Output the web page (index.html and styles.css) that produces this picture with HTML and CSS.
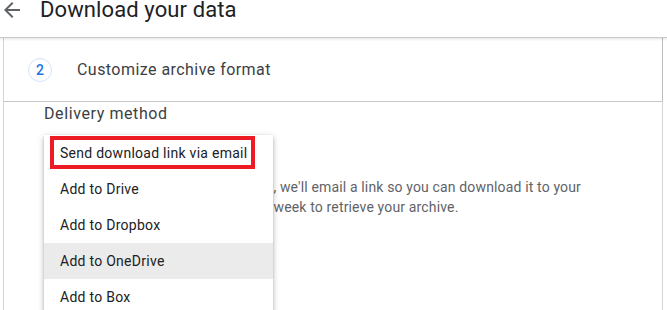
FILE: index.html
```html
<!DOCTYPE html>
<html lang="en">
<head>
<meta charset="utf-8">
<title>Download your data</title>
<link rel="stylesheet" href="styles.css">
</head>
<body>
<header class="topbar">
  <svg class="back" viewBox="0 0 24 24" width="24" height="24" aria-hidden="true"><path d="M20 11H7.83l5.59-5.59L12 4l-8 8 8 8 1.41-1.41L7.83 13H20v-2z"/></svg>
  <h1 class="title">Download your data</h1>
</header>
<main class="card">
  <div class="step">
    <span class="step-num">2</span>
    <span class="step-label">Customize archive format</span>
  </div>
  <section class="delivery">
    <div class="delivery-label">Delivery method</div>
    <div class="select-slot"></div>
    <p class="desc">When your archive has been created, we'll email a link so you can download it to your device. You will then have up to one week to retrieve your archive.</p>
    <ul class="menu">
      <li class="menu-item">Send download link via email<span class="mark"></span></li>
      <li class="menu-item">Add to Drive</li>
      <li class="menu-item">Add to Dropbox</li>
      <li class="menu-item hover">Add to OneDrive</li>
      <li class="menu-item">Add to Box</li>
    </ul>
  </section>
</main>
</body>
</html>
```
FILE: styles.css
```css
* { box-sizing: border-box; }
html, body { margin: 0; padding: 0; }
body {
  width: 667px;
  height: 310px;
  overflow: hidden;
  background: #fff;
  font-family: Roboto, "Liberation Sans", Arial, sans-serif;
  color: #202124;
}
.topbar {
  display: flex;
  align-items: flex-start;
  height: 38px;
  border-bottom: 1px solid #c9c9c9;
  box-shadow: 0 1px 3px rgba(0,0,0,0.12);
  position: relative;
  z-index: 1;
}
.back {
  fill: #5f6368;
  margin-top: -2px;
  margin-right: 16px;
  flex: none;
}
.title {
  margin: 0;
  font-size: 22px;
  font-weight: 400;
  line-height: 20px;
  color: #202124;
  letter-spacing: 0.1px;
}
.card {
  margin-left: 3px;
  width: 660px;
  height: 272px;
  border-left: 1px solid #d4d4d4;
  border-right: 1px solid #d4d4d4;
}
.step {
  display: flex;
  align-items: center;
  height: 64px;
  padding-left: 24px;
  border-bottom: 1px solid #c6c6c6;
  border-right: 1px solid #bdbdbd;
  margin-right: -1px;
}
.step-num {
  width: 24px;
  height: 24px;
  border-radius: 50%;
  border: 1px solid #d2e3fc;
  color: #1a73e8;
  font-size: 14px;
  font-weight: 500;
  display: flex;
  align-items: center;
  justify-content: center;
  margin-right: 25px;
}
.step-label {
  font-size: 16px;
  color: #3c4043;
  letter-spacing: 0.45px;
}
.delivery {
  position: relative;
  padding-left: 40px;
}
.delivery-label {
  font-size: 16px;
  line-height: 24px;
  color: #3c4043;
  letter-spacing: 0.6px;
}
.select-slot { height: 51px; }
.desc {
  margin: 0;
  max-width: 548px;
  font-size: 14px;
  line-height: 20px;
  color: #5f6368;
  letter-spacing: 0.15px;
}
.menu {
  position: absolute;
  left: 40px;
  top: 33px;
  width: 229px;
  margin: 0;
  padding: 0;
  list-style: none;
  background: #fff;
  box-shadow: 0 2px 6px rgba(0,0,0,0.28), 0 1px 2px rgba(0,0,0,0.12);
}
.menu-item {
  position: relative;
  height: 36px;
  line-height: 36px;
  padding-left: 16px;
  font-size: 14px;
  color: #202124;
  letter-spacing: 0.27px;
}
.menu-item.hover { background: #ebebeb; }
.mark {
  position: absolute;
  left: 6px;
  top: 1px;
  width: 205px;
  height: 33px;
  border: 4px solid #ed1c24;
}
```
